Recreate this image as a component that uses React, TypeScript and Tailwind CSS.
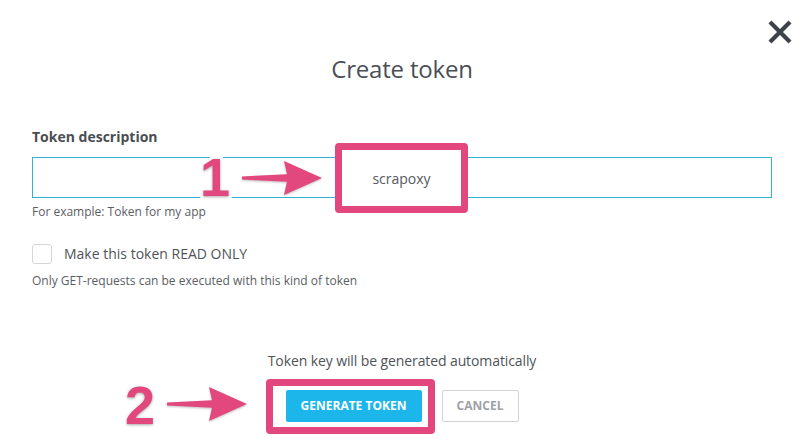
import React from "react";

function Arrow({ className }: { className?: string }) {
  return (
    <svg
      className={className}
      width="82"
      height="36"
      viewBox="0 0 82 36"
      fill="none"
    >
      <path
        d="M1 16.4 L46 14.2 L43 1 L81 18 L43 35 L46 21.8 L1 19.6 Z"
        fill="#e2487d"
      />
    </svg>
  );
}

function Step({ n, className }: { n: string; className?: string }) {
  return (
    <span
      className={`absolute font-['Liberation_Sans',sans-serif] font-bold text-[54px] leading-none text-[#e2487d] [-webkit-text-stroke:6px_white] [paint-order:stroke_fill] [text-shadow:0_1px_3px_rgba(0,0,0,0.35)] ${className ?? ""}`}
    >
      {n}
    </span>
  );
}

export default function App() {
  return (
    <div className="relative w-[810px] h-[441px] overflow-hidden bg-white font-['Open_Sans',sans-serif] text-[#555a60]">
      <button
        className="absolute right-[17px] top-[19px] text-[#3e424b]"
        aria-label="Close"
      >
        <svg width="26" height="26" viewBox="0 0 26 26">
          <path
            d="M3 3 L23 23 M23 3 L3 23"
            stroke="currentColor"
            strokeWidth="4.2"
            strokeLinecap="butt"
          />
        </svg>
      </button>

      <div className="pl-8 pr-[38px] pt-[53px]">
        <h1 className="text-center text-[24px] leading-8 font-normal tracking-[-0.2px] text-[#4b4f58]">
          Create token
        </h1>

        <label className="mt-[42px] block text-[14px] leading-5 font-bold text-[#4a4d52]">
          Token description
        </label>
        <div className="mt-[10px] h-[41px] w-full border border-[#33b3d3] bg-white" />
        <p className="mt-[6px] text-[12px] leading-4 text-[#5a5e64]">
          For example: Token for my app
        </p>

        <div className="mt-[24px] flex items-center gap-3 h-5">
          <span className="block w-5 h-5 rounded-[3px] border border-[#d6d6d6] bg-white" />
          <span className="text-[14px] leading-5 text-[#4f5358]">
            Make this token READ ONLY
          </span>
        </div>
        <p className="mt-[9px] text-[12px] leading-4 text-[#5a5e64]">
          Only GET-requests can be executed with this kind of token
        </p>

        <p className="mt-[62px] text-center text-[14px] leading-5 tracking-[-0.1px] text-[#4f5358]">
          Token key will be generated automatically
        </p>
        <div className="mt-[19px] flex justify-center gap-5">
          <button className="h-8 w-[136px] rounded-[2px] bg-[#1db6ea] text-[12px] font-bold text-white">
            GENERATE TOKEN
          </button>
          <button className="h-8 w-[77px] rounded-[2px] border border-[#d0d2d4] bg-white text-[12px] font-bold text-[#9ea2a8]">
            CANCEL
          </button>
        </div>
      </div>

      {/* annotations */}
      <div className="absolute left-[335px] top-[143px] w-[133px] h-[70px] rounded-[4px] border-[7px] border-[#e2487d] bg-white flex items-center justify-center text-[14px] text-[#55595f]">
        scrapoxy
      </div>
      <div className="absolute left-[266px] top-[379px] w-[169px] h-[55px] rounded-[4px] border-[7px] border-[#e2487d]" />

      <Step n="1" className="left-[200px] top-[150px]" />
      <Arrow className="absolute left-[241px] top-[160px] [filter:drop-shadow(0_1px_1px_rgba(0,0,0,0.25))]" />
      <Step n="2" className="left-[125px] top-[378px]" />
      <Arrow className="absolute left-[166px] top-[386px] [filter:drop-shadow(0_1px_1px_rgba(0,0,0,0.25))]" />
    </div>
  );
}
